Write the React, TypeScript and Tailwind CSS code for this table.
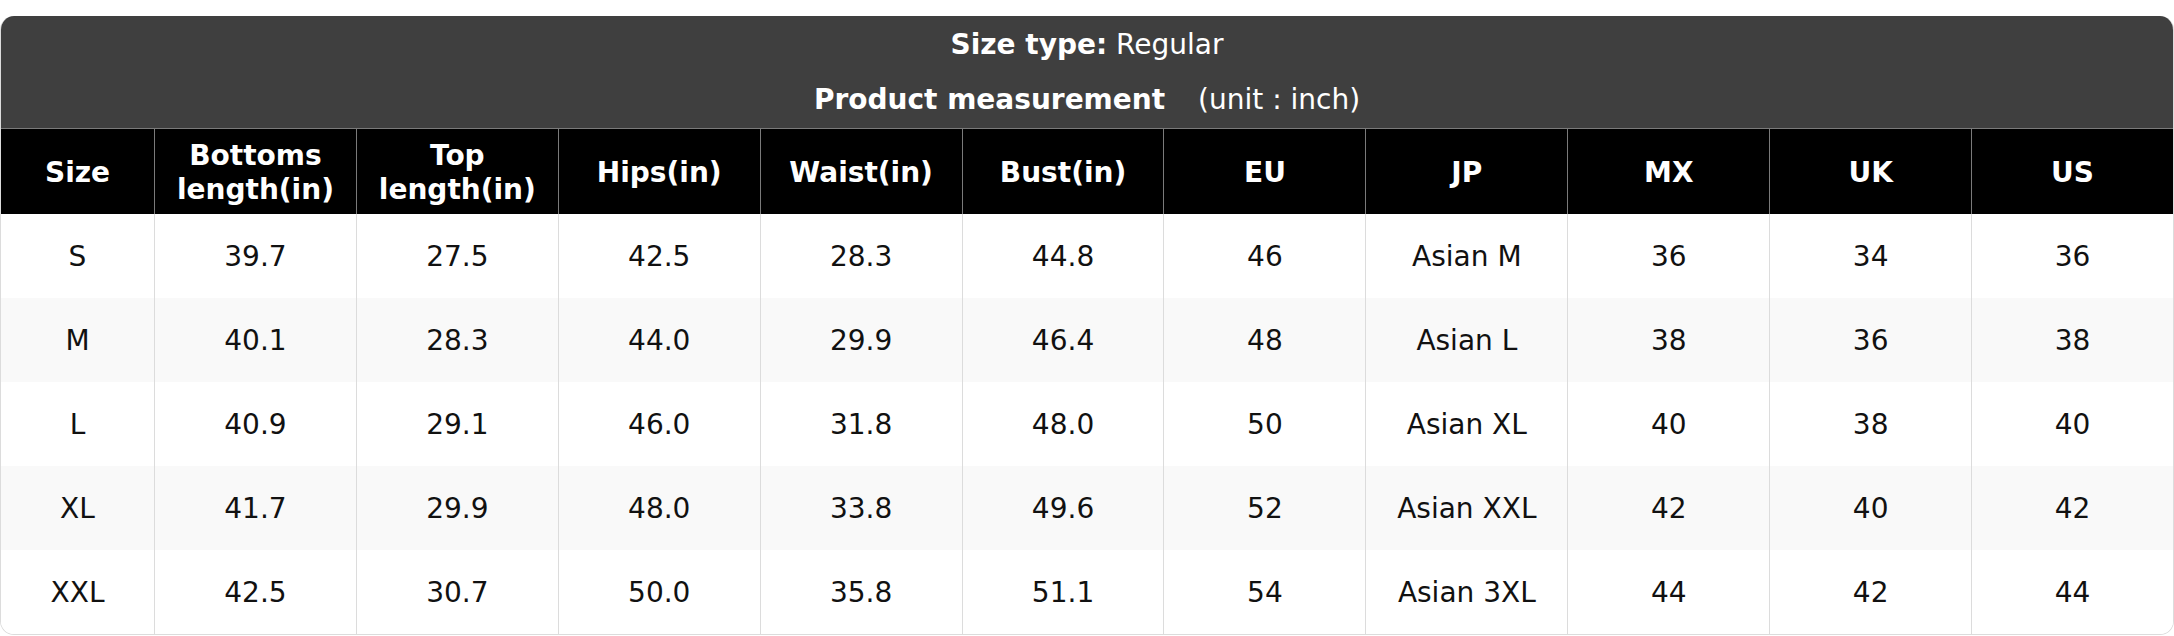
import React from "react";

const headers: string[][] = [
  ["Size"],
  ["Bottoms", "length(in)"],
  ["Top", "length(in)"],
  ["Hips(in)"],
  ["Waist(in)"],
  ["Bust(in)"],
  ["EU"],
  ["JP"],
  ["MX"],
  ["UK"],
  ["US"],
];

const rows: string[][] = [
  ["S", "39.7", "27.5", "42.5", "28.3", "44.8", "46", "Asian M", "36", "34", "36"],
  ["M", "40.1", "28.3", "44.0", "29.9", "46.4", "48", "Asian L", "38", "36", "38"],
  ["L", "40.9", "29.1", "46.0", "31.8", "48.0", "50", "Asian XL", "40", "38", "40"],
  ["XL", "41.7", "29.9", "48.0", "33.8", "49.6", "52", "Asian XXL", "42", "40", "42"],
  ["XXL", "42.5", "30.7", "50.0", "35.8", "51.1", "54", "Asian 3XL", "44", "42", "44"],
];

export default function App() {
  return (
    <div
      className="w-[2174px] h-[636px] bg-white pt-[16px]"
      style={{ fontFamily: '"DejaVu Sans", "Noto Sans", sans-serif' }}
    >
      <div className="rounded-[14px] overflow-hidden border border-t-0 border-[#dcdcdc]">
        <div className="bg-[#3f3f3f] text-white text-[28px] leading-[34px] text-center pt-[12px] pb-[10px] h-[112px]">
          <div>
            <span className="font-bold">Size type:</span> Regular
          </div>
          <div className="mt-[21px]">
            <span className="font-bold">Product measurement</span>
            <span className="ml-[33px]">(unit : inch)</span>
          </div>
        </div>
        <div className="grid grid-cols-[153px_repeat(10,minmax(0,1fr))] bg-black text-white font-bold text-[28px] leading-[34px] border-t border-[#7a7a7a]">
          {headers.map((h, i) => (
            <div
              key={i}
              className={`h-[85px] pt-[2px] flex flex-col items-center justify-center text-center ${
                i > 0 ? "border-l border-[#7a7a7a]" : ""
              }`}
            >
              {h.map((line, j) => (
                <div key={j}>{line}</div>
              ))}
            </div>
          ))}
        </div>
        {rows.map((r, ri) => (
          <div
            key={ri}
            className={`grid grid-cols-[153px_repeat(10,minmax(0,1fr))] text-[28px] text-[#111] ${
              ri % 2 === 1 ? "bg-[#f9f9f9]" : "bg-white"
            }`}
          >
            {r.map((c, ci) => (
              <div
                key={ci}
                className={`h-[84px] pt-[2px] flex items-center justify-center ${
                  ci > 0 ? "border-l border-[#dcdcdc]" : ""
                }`}
              >
                {c}
              </div>
            ))}
          </div>
        ))}
      </div>
    </div>
  );
}
